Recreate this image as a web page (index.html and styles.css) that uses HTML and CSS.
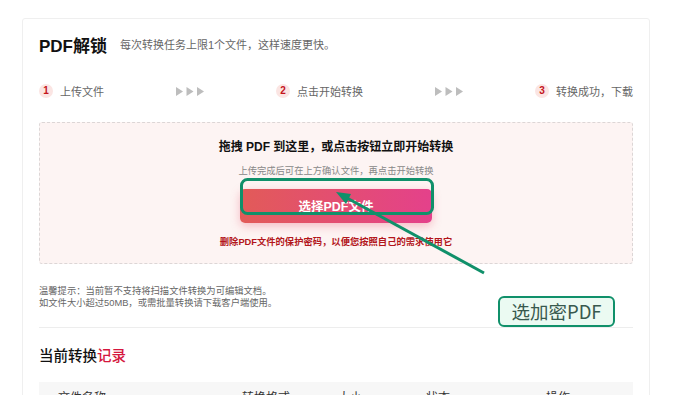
FILE: index.html
```html
<!DOCTYPE html>
<html lang="zh-CN">
<head>
	<meta charset="UTF-8">
	<meta name="viewport" content="width=device-width, initial-scale=1.0">
	<title>PDF解锁</title>
	<link rel="stylesheet" href="styles.css">
</head>
<body>
	<div class="card">
		<div class="head">
			<h1>PDF解锁</h1>
			<span class="sub">每次转换任务上限1个文件，这样速度更快。</span>
		</div>

		<ul class="steps">
			<li><i>1</i>上传文件</li>
			<li class="arrows">
				<svg width="28" height="9" viewBox="0 0 28 9"><polygon points="0,0 7,4.5 0,9"/><polygon points="10.5,0 17.5,4.5 10.5,9"/><polygon points="21,0 28,4.5 21,9"/></svg>
			</li>
			<li><i>2</i>点击开始转换</li>
			<li class="arrows">
				<svg width="28" height="9" viewBox="0 0 28 9"><polygon points="0,0 7,4.5 0,9"/><polygon points="10.5,0 17.5,4.5 10.5,9"/><polygon points="21,0 28,4.5 21,9"/></svg>
			</li>
			<li><i>3</i>转换成功，下载</li>
		</ul>

		<div class="drop">
			<p class="drop-title">拖拽 PDF 到这里，或点击按钮立即开始转换</p>
			<p class="drop-sub">上传完成后可在上方确认文件，再点击开始转换</p>
			<a href="#" class="pick">选择PDF文件</a>
			<p class="drop-note">删除PDF文件的保护密码，以便您按照自己的需求使用它</p>
		</div>

		<div class="tips">
			<p>温馨提示：当前暂不支持将扫描文件转换为可编辑文档。</p>
			<p>如文件大小超过50MB，或需批量转换请下载客户端使用。</p>
		</div>

		<h2 class="record">当前转换<em>记录</em></h2>

		<div class="thead">
			<span>文件名称</span>
			<span>转换格式</span>
			<span>大小</span>
			<span>状态</span>
			<span>操作</span>
		</div>
	</div>

	<!-- annotation drawn over the page -->
	<svg class="mark" width="700" height="395" viewBox="0 0 700 395">
		<rect x="241.5" y="179.5" width="191" height="34" rx="6" fill="none" stroke="#10906a" stroke-width="3"/>
		<line x1="484" y1="273" x2="347" y2="198" stroke="#10906a" stroke-width="3"/>
		<polygon points="336,192 351,194 346,204" fill="#10906a"/>
	</svg>
	<div class="label">选加密PDF</div>
</body>
</html>
```

FILE: styles.css
```css
* {
	margin: 0;
	padding: 0;
	list-style: none;
	text-decoration: none;
	box-sizing: border-box;
}
body {
	position: relative;
	background-color: #fff;
	font-family: "Liberation Sans", "Noto Sans CJK SC", sans-serif;
	color: #333;
}
.card {
	width: 628px;
	margin: 18px 0 0 22px;
	padding: 15px 16px 40px;
	border: 1px solid #efefef;
	border-radius: 3px;
}
.head {
	display: flex;
	align-items: center;
	gap: 13px;
	height: 20px;
}
.head h1 {
	font-size: 17px;
	font-weight: bold;
	color: #111;
}
.head .sub {
	font-size: 11px;
	color: #666;
}
.steps {
	display: flex;
	justify-content: space-between;
	align-items: center;
	height: 20px;
	margin-top: 27px;
	font-size: 11px;
	color: #666;
}
.steps li {
	display: flex;
	align-items: center;
	gap: 7px;
}
.steps i {
	display: inline-block;
	width: 14px;
	height: 14px;
	line-height: 14px;
	border-radius: 50%;
	background-color: #fbe5e3;
	color: #c4141c;
	font-style: normal;
	font-weight: bold;
	font-size: 10px;
	text-align: center;
}
.steps .arrows svg {
	fill: #bdbdbd;
}
.drop {
	display: flex;
	flex-direction: column;
	align-items: center;
	margin-top: 21px;
	height: 142px;
	padding-top: 15px;
	border: 1px dashed #dcd6d6;
	border-radius: 3px;
	background-color: #fdf4f3;
}
.drop-title {
	font-size: 12px;
	font-weight: bold;
	line-height: 18px;
	color: #111;
}
.drop-sub {
	margin-top: 8px;
	font-size: 9.3px;
	line-height: 14px;
	color: #888;
}
.pick {
	display: block;
	width: 192px;
	height: 34px;
	margin-top: 11px;
	line-height: 36px;
	border-radius: 5px;
	background: linear-gradient(to right, #e25b58, #e4418b);
	box-shadow: 0 3px 10px rgba(228, 80, 105, .35);
	color: #fff;
	font-size: 12.5px;
	font-weight: bold;
	text-align: center;
}
.drop-note {
	margin-top: 12px;
	font-size: 9.3px;
	font-weight: bold;
	line-height: 14px;
	color: #b3161b;
}
.tips {
	margin-top: 21px;
	font-size: 9.3px;
	line-height: 12px;
	color: #666;
}
.record {
	margin-top: 18px;
	padding-top: 18px;
	border-top: 1px solid #ededed;
	font-size: 14.5px;
	font-weight: 500;
	line-height: 20px;
	color: #111;
}
.record em {
	font-style: normal;
	color: #d5173e;
}
.thead {
	display: grid;
	grid-template-columns: 184px 96px 88px 120px 1fr;
	margin-top: 16px;
	height: 36px;
	padding-left: 19px;
	line-height: 32px;
	background-color: #f7f7f7;
	font-size: 12px;
	color: #333;
}
.mark {
	position: absolute;
	left: 0;
	top: 0;
	pointer-events: none;
}
.label {
	position: absolute;
	left: 498px;
	top: 296px;
	width: 117px;
	height: 31px;
	border: 2.5px solid #10906a;
	border-radius: 6px;
	background-color: #ebfaf2;
	color: #38594e;
	font-family: "Noto Sans CJK SC", sans-serif;
	font-size: 18.5px;
	line-height: 26px;
	text-align: center;
}
```
